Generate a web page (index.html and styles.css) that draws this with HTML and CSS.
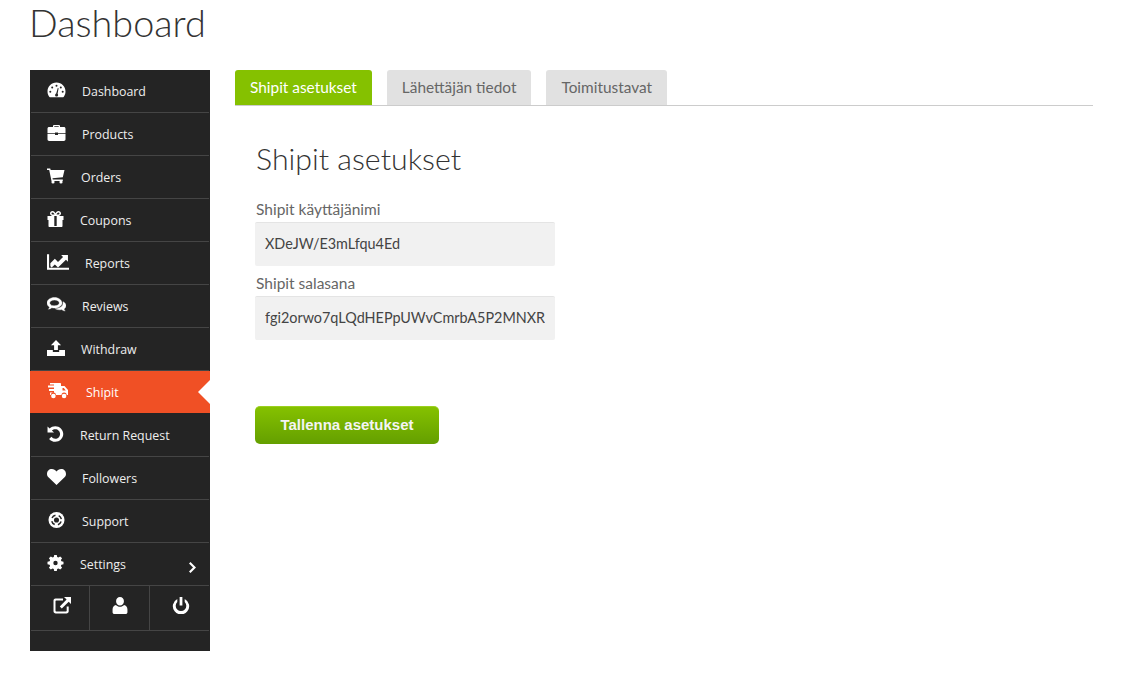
FILE: index.html
```html
<!DOCTYPE html>
<html lang="en">
<head>
    <meta charset="UTF-8">
    <title>Dashboard</title>
    <link rel="stylesheet" href="styles.css">
</head>
<body>
    <div class="page">
        <h1 class="page-title">Dashboard</h1>
        <div class="layout">
            <aside class="sidebar">
                <ul class="menu">
                    <li class="menu-item"><a href="#">
                        <svg class="icon w19" viewBox="0 0 19 16"><path fill-rule="evenodd" d="M9.500 .5C4.300 .5 .5 4.700 .5 9.500c0 2 .6 3.700 1.700 5.200l.6.6h13.400l.6-.6c1.100-1.500 1.700-3.200 1.700-5.200C18.500 4.700 14.700 .5 9.500 .5zM9.500 2.700a1 1 0 1 1 0 2 1 1 0 0 1 0-2zM5.200 4.500a1 1 0 1 1 0 2 1 1 0 0 1 0-2zM13.800 4.500a1 1 0 1 1 0 2 1 1 0 0 1 0-2zM3.300 8.800a1 1 0 1 1 0 2 1 1 0 0 1 0-2zM15.700 8.800a1 1 0 1 1 0 2 1 1 0 0 1 0-2zM10.800 6l.8.300-1 5.500c.4.400.6 1 .5 1.500-.1.900-.9 1.400-1.700 1.300-.9-.1-1.400-.9-1.300-1.700.1-.6.500-1.100 1.100-1.300z"/></svg>
                        <span>Dashboard</span></a></li>
                    <li class="menu-item"><a href="#">
                        <svg class="icon w19" viewBox="0 0 19 16"><path d="M6 2V1.200C6 .5 6.500 0 7.200 0h4.600C12.500 0 13 .5 13 1.200V2h3.800c1 0 1.700.7 1.700 1.700V8.200H11V7.400H8v.8H.5V3.700C.5 2.700 1.200 2 2.200 2zM7.300 2h4.400V1.300H7.300zM.5 9H8v1h3V9h7.500v5.300c0 1-.7 1.700-1.700 1.700H2.200c-1 0-1.700-.7-1.700-1.700z"/></svg>
                        <span>Products</span></a></li>
                    <li class="menu-item"><a href="#">
                        <svg class="icon w18" viewBox="0 0 18 15"><path d="M0 0h3.200l.5 1.600H17.500l-1.700 7.200-10.300 1 .3 1.200h10v1.500H4.500L2.200 1.500H0zM6 11.800a1.600 1.600 0 1 1 0 3.200 1.600 1.600 0 0 1 0-3.200zM14 11.800a1.600 1.600 0 1 1 0 3.200 1.600 1.600 0 0 1 0-3.200z"/></svg>
                        <span>Orders</span></a></li>
                    <li class="menu-item"><a href="#">
                        <svg class="icon w17" viewBox="0 0 16 16"><path fill-rule="evenodd" d="M0 5h4.600C3.500 4.600 2.500 3.700 2.500 2.500 2.500 1.100 3.600 0 5 0c1.500 0 2.400 1 3 2.300C8.600 1 9.500 0 11 0c1.400 0 2.500 1.100 2.500 2.500 0 1.200-1 2.100-2.100 2.500H16v4h-1v6c0 .6-.4 1-1 1H2c-.6 0-1-.4-1-1V9H0zM6.800 5h2.400v10H6.800zM5 1.500a1 1 0 0 0 0 2h2C6.600 2.500 6 1.500 5 1.500zM11 1.500c-1 0-1.600 1-2 2h2a1 1 0 0 0 0-2z"/></svg>
                        <span>Coupons</span></a></li>
                    <li class="menu-item"><a href="#">
                        <svg class="icon w22" viewBox="0 0 21 15"><path d="M0 0h2v13h19v2H0zM3.200 11.500V8.800L7.500 4.500l3 3L15.300 2.700 13.500 .7h6.500v6.500l-1.900-1.900L10.500 12.800 7.500 9.800 4.500 12.800z"/></svg>
                        <span>Reports</span></a></li>
                    <li class="menu-item"><a href="#">
                        <svg class="icon heavy w19" viewBox="0 0 19 16"><path fill-rule="evenodd" d="M7.500 .5C3.400 .5 0 2.900 0 6c0 1.700 1 3.200 2.600 4.200-.2.700-.6 1.400-1.200 2 1.300-.2 2.500-.7 3.400-1.400.9.200 1.800.3 2.700.3 4.100 0 7.500-2.300 7.500-5.100S11.600 .5 7.500 .5zM7.500 3c2.900 0 4.800 1.400 4.800 3s-1.900 2.800-4.800 2.800c-1 0-1.900-.1-2.700-.4-.3.200-.5.400-.8.600l.2-1.100C3.200 7.400 2.700 6.700 2.700 6c0-1.600 1.900-3 4.800-3zM16.100 4.700c1.800.9 2.900 2.300 2.900 3.900 0 1.400-.8 2.500-2 3.300.1.800.5 1.500 1.200 2.100-1.400-.1-2.600-.7-3.500-1.400-.7.100-1.400.2-2.200.2-1.600 0-3-.4-4.200-1.100 3.800-.1 8.400-2 7.800-7z"/></svg>
                        <span>Reviews</span></a></li>
                    <li class="menu-item"><a href="#">
                        <svg class="icon w18" viewBox="0 0 17 15"><path d="M8.500 0l4.800 5h-3v4.500H6.700V5h-3zM0 9.500h5.500v1.800h6V9.500H17V15H0z"/></svg>
                        <span>Withdraw</span></a></li>
                    <li class="menu-item active"><a href="#">
                        <svg class="icon w23" viewBox="0 0 21 16"><path d="M2 0h10c.6 0 1 .4 1 1v2h3.500L20 7v5h-1.300a2.600 2.600 0 0 0-5.200 0H8a2.600 2.600 0 0 0-5.200 0H2V9.500h4V8H1V6h5V4.500H0v-2h6V1.500H2zM14.500 5v2.500h3.300L15.800 5zM5.400 10.700a2.300 2.300 0 1 1 0 4.600 2.300 2.300 0 0 1 0-4.600zM16.100 10.700a2.300 2.300 0 1 1 0 4.600 2.300 2.300 0 0 1 0-4.600z"/></svg>
                        <span>Shipit</span></a></li>
                    <li class="menu-item"><a href="#">
                        <svg class="icon w17" viewBox="0 0 16 15"><path d="M.5 .5l2 1.800C3.900 1 5.800 .2 7.800 .2c4.100 0 7.500 3.200 7.500 7.300s-3.400 7.300-7.500 7.300c-2.300 0-4.400-1-5.800-2.700l2.200-1.900c.8 1.100 2.200 1.800 3.600 1.800 2.500 0 4.500-2 4.500-4.500S10.300 3 7.800 3c-1.200 0-2.300.5-3.200 1.300L6.600 6.200H.5z"/></svg>
                        <span>Return Request</span></a></li>
                    <li class="menu-item"><a href="#">
                        <svg class="icon w19" viewBox="0 0 19 16"><path d="M9.500 16L1.700 8.500C.6 7.400 0 6.200 0 4.900 0 2.100 2 0 4.900 0 6.700 0 8.400 1 9.500 2.500 10.600 1 12.300 0 14.100 0 17 0 19 2.100 19 4.900c0 1.300-.6 2.500-1.700 3.600z"/></svg>
                        <span>Followers</span></a></li>
                    <li class="menu-item"><a href="#">
                        <svg class="icon w19" viewBox="0 0 17 17"><circle cx="8.500" cy="8.500" r="8.500"/><circle class="cut-ring" cx="8.500" cy="8.500" r="5.200" stroke-dasharray="4.600 3.570" stroke-dashoffset="-1.790"/><circle class="cut-hole" cx="8.500" cy="8.500" r="2.700"/></svg>
                        <span>Support</span></a></li>
                    <li class="menu-item"><a href="#">
                        <svg class="icon w17" viewBox="0 0 16 16"><path fill-rule="evenodd" d="M6.700 0h2.600l.4 2.100 1.200.5L12.700 1.400l1.900 1.900-1.200 1.800.5 1.200 2.100.4v2.600l-2.100.4-.5 1.200 1.200 1.800-1.900 1.900-1.800-1.200-1.200.5-.4 2.100H6.700l-.4-2.100-1.200-.5-1.800 1.200-1.900-1.900 1.200-1.800-.5-1.200L0 9.300V6.700l2.100-.4.5-1.200-1.200-1.800 1.900-1.900 1.800 1.200 1.200-.5zM8 5.800a2.200 2.200 0 1 0 0 4.400 2.200 2.200 0 0 0 0-4.400z"/></svg>
                        <span>Settings</span>
                        <svg class="chevron" viewBox="0 0 7 11"><path d="M1.500 0L7 5.500 1.500 11 0 9.500l4-4-4-4z"/></svg></a></li>
                </ul>
                <div class="sidebar-actions">
                    <a href="#"><svg class="action-icon shift-right" viewBox="0 0 18 17"><path d="M.5 3.500C.5 2.400 1.400 1.500 2.500 1.500H10V3.500H3.200c-.4 0-.7.300-.7.700v9.600c0 .4.300.7.700.7H13c.4 0 .7-.3.700-.7V9.500h2v4.800c0 1.300-1 2.200-2.200 2.200H2.700C1.500 16.500 .5 15.600 .5 14.300z"/><path d="M11 0H18v7l-2.300-2.300L8.800 11.500 6.800 9.500l6.800-6.900z"/></svg></a>
                    <a href="#"><svg class="action-icon" viewBox="0 0 14 16"><path d="M7 0c2.200 0 3.700 1.800 3.700 4S9.200 8 7 8 3.300 6.200 3.300 4 4.800 0 7 0zM3.200 7.500C4.200 8.600 5.500 9.200 7 9.200s2.800-.6 3.800-1.700c1.900.3 3.200 2 3.200 4.300v2.500c0 1-.8 1.700-1.800 1.700H1.800C.8 16 0 15.300 0 14.300v-2.500c0-2.300 1.300-4 3.200-4.300z"/></svg></a>
                    <a href="#"><svg class="action-icon shift-right" viewBox="0 0 16 16"><path d="M6.700 0h2.600v8H6.700z"/><path d="M4.500 1.800v2.900a5 5 0 1 0 7 0V1.800a7.700 7.700 0 1 1-7 0z"/></svg></a>
                </div>
            </aside>
            <main class="content">
                <ul class="tabs">
                    <li class="tab tab-active">Shipit asetukset</li>
                    <li class="tab">Lähettäjän tiedot</li>
                    <li class="tab">Toimitustavat</li>
                </ul>
                <form class="settings-form">
                    <h2>Shipit asetukset</h2>
                    <label for="username">Shipit käyttäjänimi</label>
                    <input id="username" type="text" value="XDeJW/E3mLfqu4Ed">
                    <label for="password">Shipit salasana</label>
                    <input id="password" type="text" value="fgi2orwo7qLQdHEPpUWvCmrbA5P2MNXR">
                    <button type="button">Tallenna asetukset</button>
                </form>
            </main>
        </div>
    </div>
</body>
</html>
```

FILE: styles.css
```css
* {
    margin: 0;
    padding: 0;
    box-sizing: border-box;
}

body {
    font-family: 'Open Sans', sans-serif;
    background-color: #fff;
    color: #333;
}

.page {
    width: 1063px;
    margin-left: 30px;
}

.page-title {
    height: 70px;
    margin-left: -1px;
    font-family: 'Lato', sans-serif;
    font-weight: 300;
    font-size: 37.800px;
    line-height: 45px;
    color: #333;
}

.layout {
    display: flex;
    gap: 25px;
}

.sidebar {
    width: 180px;
    height: 581px;
    background-color: #242424;
    flex-shrink: 0;
}

.menu {
    list-style: none;
}

.menu-item {
    position: relative;
    height: 43px;
}

.menu-item::after {
    content: "";
    position: absolute;
    left: 1px;
    right: 1px;
    bottom: 0;
    height: 1px;
    background-color: #454545;
}

.menu-item a {
    display: flex;
    align-items: center;
    gap: 16px;
    height: 42px;
    padding-left: 17px;
    color: #eee;
    font-size: 12.400px;
    text-decoration: none;
}

.icon {
    fill: #fff;
    height: 16px;
    flex-shrink: 0;
    margin-top: -3px;
}

.heavy {
    stroke: #fff;
    stroke-width: .4;
}

.cut-ring {
    fill: none;
    stroke: #242424;
    stroke-width: 1.600;
}

.cut-hole {
    fill: #242424;
}

.w17 { width: 17px; }
.w18 { width: 18px; }
.w19 { width: 19px; }
.w22 { width: 22px; }
.w23 { width: 23px; }

.chevron {
    fill: #fff;
    width: 7px;
    height: 11px;
    margin-left: auto;
    margin-right: 14px;
    margin-top: 6px;
}

.active a {
    background-color: #f05025;
    color: #fff;
}

.active::before {
    content: "";
    position: absolute;
    right: 0;
    top: 9px;
    border-style: solid;
    border-width: 12px 12px 12px 0;
    border-color: transparent #fff transparent transparent;
}

.active::after {
    background-color: #242424;
}

.sidebar-actions {
    display: flex;
    height: 45px;
    border-bottom: 1px solid #454545;
    margin: 0 1px;
}

.sidebar-actions a {
    display: flex;
    justify-content: center;
    align-items: flex-start;
    padding-top: 11px;
    width: 60px;
    border-right: 1px solid #454545;
}

.sidebar-actions a:last-child {
    border-right: none;
}

.action-icon {
    fill: #fff;
    width: 18px;
    height: 17px;
}

.shift-right {
    margin-left: 3px;
}

.content {
    flex: 1;
}

.tabs {
    display: flex;
    gap: 15px;
    list-style: none;
    height: 36px;
    border-bottom: 1px solid #ccc;
}

.tab {
    height: 35px;
    padding: 0 15px;
    background-color: #e1e1e1;
    border-radius: 3px 3px 0 0;
    color: #666;
    font-family: 'Lato', sans-serif;
    font-size: 15.400px;
    line-height: 35px;
}

.tab-active {
    background-color: #85c100;
    color: #fff;
}

.settings-form {
    padding: 32px 0 0 20px;
}

.settings-form h2 {
    margin-left: 1px;
    font-family: 'Lato', sans-serif;
    font-weight: 300;
    font-size: 30.300px;
    line-height: 40px;
    color: #333;
    margin-bottom: 21px;
}

.settings-form label {
    display: block;
    margin-left: 1px;
    font-family: 'Lato', sans-serif;
    font-size: 15.500px;
    line-height: 20px;
    color: #666;
    margin-bottom: 3px;
}

.settings-form input {
    display: block;
    width: 300px;
    height: 44px;
    padding: 0 10px 3px;
    margin-bottom: 7px;
    border: none;
    border-top: 1px solid #e4e4e4;
    border-radius: 2px;
    background-color: #f1f1f1;
    font-family: 'Lato', sans-serif;
    font-size: 14.400px;
    color: #444;
}

.settings-form button {
    display: block;
    width: 184px;
    height: 38px;
    margin-top: 66px;
    padding-bottom: 2px;
    border: none;
    border-top: 1px solid #9bd01f;
    border-radius: 5px;
    background: linear-gradient(#85c100, #649f00);
    color: #f4f4f4;
    font-family: 'Liberation Sans', sans-serif;
    font-weight: bold;
    font-size: 15px;
}
```
